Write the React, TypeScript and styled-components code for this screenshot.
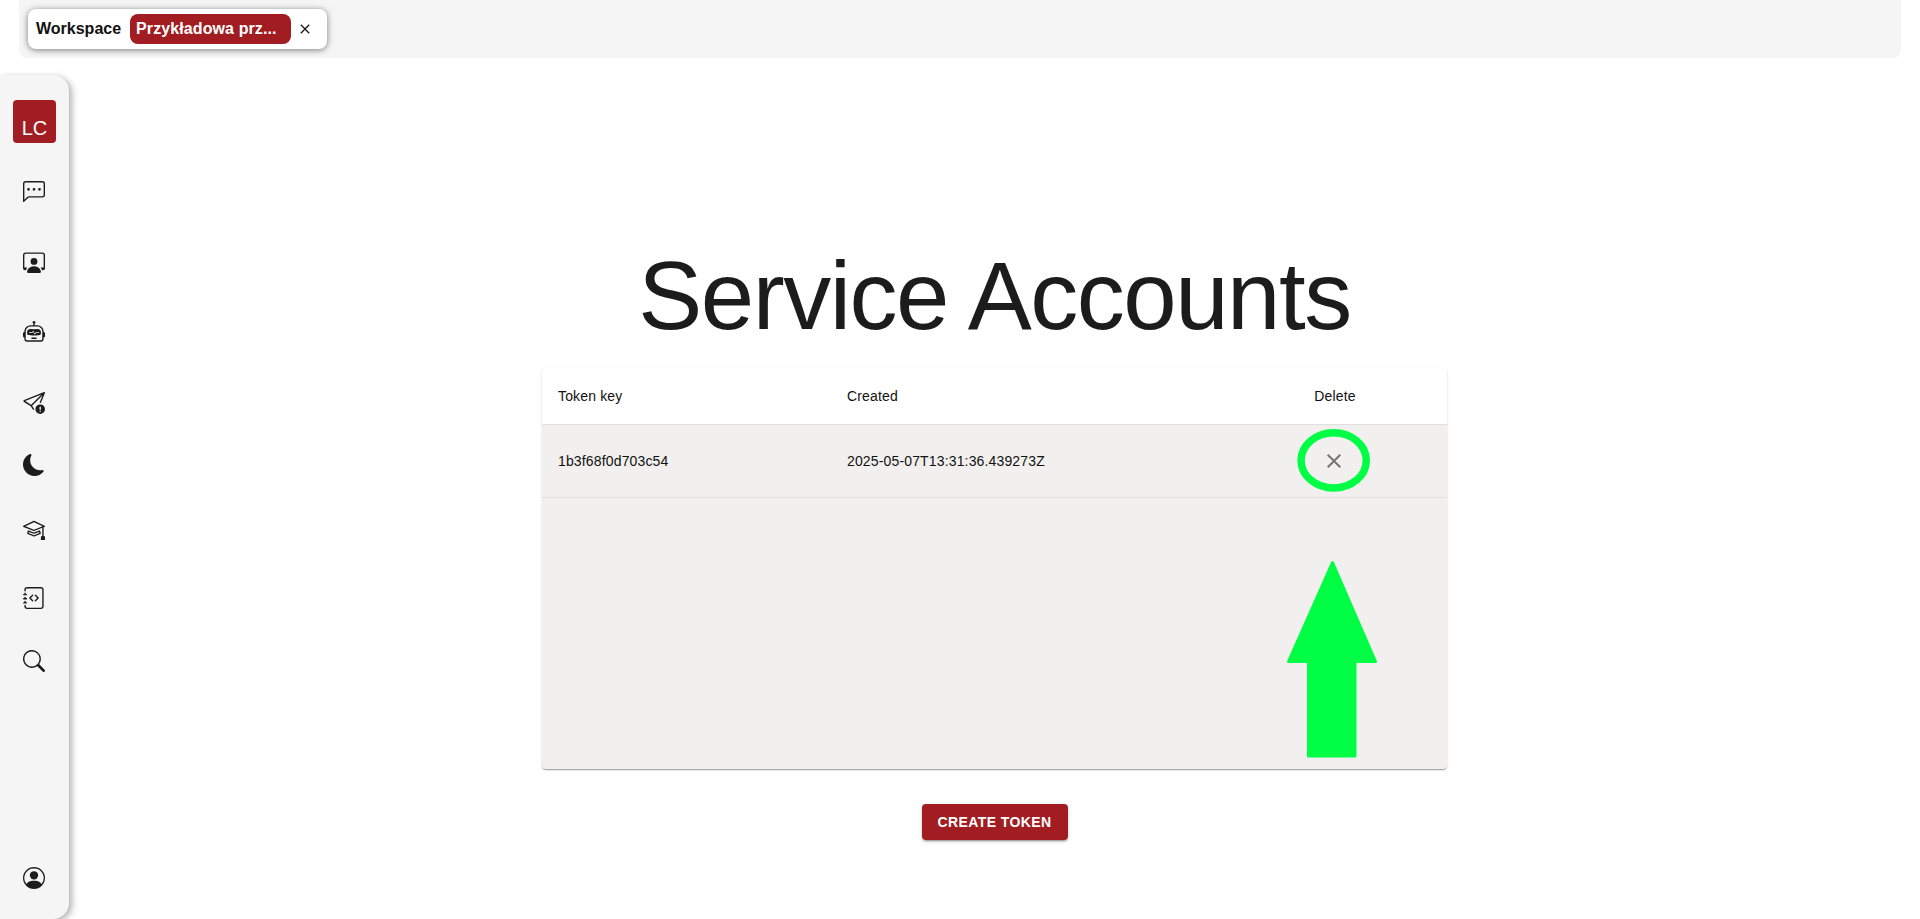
import React from "react";
import styled, { createGlobalStyle } from "styled-components";
import {
  BsChatLeftDots,
  BsPersonWorkspace,
  BsRobot,
  BsSendExclamation,
  BsMoonFill,
  BsMortarboard,
  BsJournalCode,
  BsSearch,
  BsPersonCircle,
} from "react-icons/bs";

const Global = createGlobalStyle`
  html, body { margin: 0; padding: 0; height: 100%; background: #fff; overflow: hidden; }
  body { font-family: "Liberation Sans", Arial, sans-serif; color: #1c1c1c; }
  #root { height: 100%; }
`;

const Page = styled.div`
  position: relative;
  height: 919px;
  display: flex;
  flex-direction: column;
`;

const TopBar = styled.header`
  height: 58px;
  margin: 0 19px;
  flex: none;
  background: #f5f5f5;
  border-radius: 0 0 8px 8px;
  padding: 9px 0 0 9px;
  box-sizing: border-box;
`;

const WorkspaceCard = styled.div`
  width: 299px;
  height: 40px;
  box-sizing: border-box;
  display: flex;
  align-items: center;
  padding-left: 8px;
  background: #fff;
  border-radius: 8px;
  box-shadow: 0 1px 6px rgba(0, 0, 0, 0.5);
`;

const WorkspaceLabel = styled.span`
  font-size: 16px;
  font-weight: 700;
  color: #111;
`;

const WorkspaceChip = styled.span`
  margin-left: 9px;
  width: 161px;
  height: 30px;
  box-sizing: border-box;
  padding-left: 6px;
  display: flex;
  align-items: center;
  background: #a11d22;
  color: #fff;
  font-size: 16px;
  font-weight: 700;
  letter-spacing: 0.1px;
  border-radius: 8px;
  white-space: nowrap;
`;

const CloseGlyph = styled.svg`
  width: 16px;
  height: 16px;
  margin-left: 6px;
  fill: #1c1c1c;
`;

const Body = styled.div`
  flex: 1;
  display: flex;
  margin-top: 17px;
  min-height: 0;
`;

const Sidebar = styled.nav`
  width: 69px;
  flex: none;
  box-sizing: border-box;
  padding: 25px 0 29px;
  background: #f5f5f5;
  border-radius: 0 16px 16px 0;
  box-shadow: 3px 2px 6px rgba(0, 0, 0, 0.3);
  display: flex;
  flex-direction: column;
  align-items: center;
`;

const Avatar = styled.div`
  width: 43px;
  height: 43px;
  margin-bottom: 37px;
  border-radius: 4px;
  background: #a11d22;
  color: #fff;
  font-size: 20px;
  line-height: 57px;
  text-align: center;
`;

const NavIcon = styled.div<{ $gap: number }>`
  width: 24px;
  height: 24px;
  margin-top: ${(p) => p.$gap}px;
  margin-right: 1px;
  display: flex;
  align-items: center;
  justify-content: center;
  font-size: 22px;
  color: #1c1c1c;
`;

const Spacer = styled.div`
  flex: 1;
`;

const Main = styled.main`
  flex: 1;
  min-width: 0;
  padding-top: 165px;
  display: flex;
  flex-direction: column;
  align-items: center;
`;

const Title = styled.h1`
  margin: 0 0 16px;
  font-size: 96px;
  line-height: 112px;
  font-weight: 400;
  letter-spacing: -1.5px;
  color: #1c1c1c;
`;

const TableCard = styled.section`
  width: 905px;
  height: 401px;
  display: flex;
  flex-direction: column;
  background: #f1f0ee;
  border-radius: 4px;
  overflow: hidden;
  box-shadow: 0 2px 1px -1px rgba(0, 0, 0, 0.2), 0 1px 1px rgba(0, 0, 0, 0.14), 0 1px 3px rgba(0, 0, 0, 0.12);
`;

const Row = styled.div<{ $head?: boolean }>`
  display: grid;
  grid-template-columns: 289px 1fr 226px;
  align-items: center;
  height: ${(p) => (p.$head ? 57 : 73)}px;
  box-sizing: border-box;
  background: ${(p) => (p.$head ? "#fff" : "transparent")};
  border-bottom: 1px solid #e0e0e0;
  font-size: 14px;
  letter-spacing: 0.15px;
  color: #111;
`;

const Cell = styled.div<{ $center?: boolean }>`
  padding-left: ${(p) => (p.$center ? 0 : 16)}px;
  display: ${(p) => (p.$center ? "flex" : "block")};
  justify-content: center;
`;

const DeleteHeading = styled.span`
  margin-left: 2px;
`;

const DeleteGlyph = styled.svg`
  width: 24px;
  height: 24px;
  fill: #757575;
`;

const CreateButton = styled.button`
  margin-top: 35px;
  width: 146px;
  height: 36px;
  padding: 0;
  border: 0;
  border-radius: 4px;
  background: #a11d22;
  color: #fff;
  font: 700 14px "Liberation Sans", Arial, sans-serif;
  letter-spacing: 0.4px;
  text-transform: uppercase;
  box-shadow: 0 3px 1px -2px rgba(0, 0, 0, 0.2), 0 2px 2px rgba(0, 0, 0, 0.14), 0 1px 5px rgba(0, 0, 0, 0.12);
`;

const Annotation = styled.svg`
  position: absolute;
  left: 1280px;
  top: 420px;
  width: 110px;
  height: 345px;
  pointer-events: none;
`;

const closePath =
  "M19 6.41 17.59 5 12 10.59 6.41 5 5 6.41 10.59 12 5 17.59 6.41 19 12 13.41 17.59 19 19 17.59 13.41 12z";

export default function App() {
  return (
    <Page>
      <Global />
      <TopBar>
        <WorkspaceCard>
          <WorkspaceLabel>Workspace</WorkspaceLabel>
          <WorkspaceChip>Przykładowa prz...</WorkspaceChip>
          <CloseGlyph viewBox="0 0 24 24">
            <path d={closePath} />
          </CloseGlyph>
        </WorkspaceCard>
      </TopBar>
      <Body>
        <Sidebar>
          <Avatar>LC</Avatar>
          <NavIcon $gap={0}><BsChatLeftDots /></NavIcon>
          <NavIcon $gap={46}><BsPersonWorkspace /></NavIcon>
          <NavIcon $gap={46}><BsRobot /></NavIcon>
          <NavIcon $gap={47}><BsSendExclamation /></NavIcon>
          <NavIcon $gap={38}><BsMoonFill /></NavIcon>
          <NavIcon $gap={40}><BsMortarboard /></NavIcon>
          <NavIcon $gap={45}><BsJournalCode /></NavIcon>
          <NavIcon $gap={39}><BsSearch /></NavIcon>
          <Spacer />
          <NavIcon $gap={0}><BsPersonCircle /></NavIcon>
        </Sidebar>
        <Main>
          <Title>Service Accounts</Title>
          <TableCard>
            <Row $head>
              <Cell>Token key</Cell>
              <Cell>Created</Cell>
              <Cell $center><DeleteHeading>Delete</DeleteHeading></Cell>
            </Row>
            <Row>
              <Cell>1b3f68f0d703c54</Cell>
              <Cell>2025-05-07T13:31:36.439273Z</Cell>
              <Cell $center>
                <DeleteGlyph viewBox="0 0 24 24">
                  <path d={closePath} />
                </DeleteGlyph>
              </Cell>
            </Row>
          </TableCard>
          <CreateButton>Create token</CreateButton>
        </Main>
      </Body>
      <Annotation viewBox="1280 420 110 345">
        <ellipse cx="1333.7" cy="460.4" rx="32.6" ry="27.6" fill="none" stroke="#00ff44" strokeWidth="7.5" />
        <path
          d="M1332.5 562.5 L1375.5 661.5 L1355 661.5 L1355 756 L1308.5 756 L1308.5 661.5 L1288.5 661.5 Z"
          fill="#00ff44"
          stroke="#00ff44"
          strokeWidth="3"
          strokeLinejoin="round"
        />
      </Annotation>
    </Page>
  );
}
